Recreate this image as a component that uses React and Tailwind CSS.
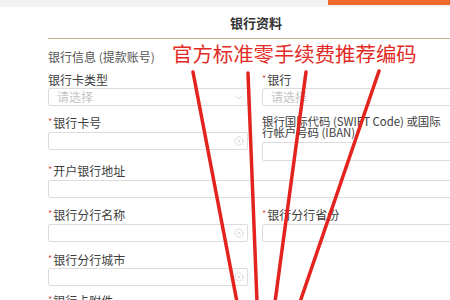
import React from "react";
import { ChevronDown, CircleX } from "lucide-react";

const font = { fontFamily: '"Noto Sans CJK SC", "Noto Sans", sans-serif' };

function Label({ req, children, className = "" }) {
  return (
    <div className={"flex items-center h-[16px] text-[12px] leading-[16px] text-[#3d3d3d] whitespace-nowrap " + className}>
      {req && <span className="text-[#d9534f] text-[9px] leading-none mr-[1px] -mt-[4px]">*</span>}
      <span>{children}</span>
    </div>
  );
}

function Input({ clear, select, placeholder, className = "" }) {
  return (
    <div className={"relative flex items-center h-[18px] border border-[#dcdcdc] rounded-[2px] bg-white pl-[8px] pr-[3px] " + className}>
      {placeholder && <span className="text-[12px] leading-none text-[#c4c4c4]">{placeholder}</span>}
      <div className="flex-1" />
      {select && <ChevronDown size={11} strokeWidth={1.2} className="text-[#b8b8b8]" />}
      {clear && <CircleX size={10} strokeWidth={1.3} className="text-[#c4c4c4]" />}
    </div>
  );
}

export default function App() {
  return (
    <div className="relative w-[450px] h-[300px] overflow-hidden bg-white" style={font}>
      {/* top band */}
      <div className="flex justify-end h-[7px] bg-[#f2f2f2]">
        <div className="w-[122px] h-[5px] bg-[#f0682c]" />
      </div>

      <div className="pl-[48px] w-[560px]">
        {/* title */}
        <div className="flex items-center h-[32px] border-b border-[#cdae8c] pl-[182px]">
          <span className="text-[13px] font-bold text-[#333] leading-none">银行资料</span>
        </div>

        <div className="mt-[10px] text-[12px] leading-[16px] text-[#555]">银行信息 (提款账号)</div>

        {/* row 1 */}
        <div className="grid grid-cols-[200px_1fr] gap-x-[14px] mt-[7px]">
          <div>
            <Label>银行卡类型</Label>
            <Input select placeholder="请选择" />
          </div>
          <div>
            <Label req>银行</Label>
            <Input placeholder="请选择" />
          </div>
        </div>

        {/* row 2 */}
        <div className="grid grid-cols-[200px_1fr] gap-x-[14px] mt-[9px] items-start">
          <div>
            <Label req>银行卡号</Label>
            <Input clear className="mt-[1px]" />
          </div>
          <div>
            <div className="mt-[1px] text-[11.4px] leading-[11px] text-[#3d3d3d] whitespace-nowrap">
              银行国际代码 (SWIFT Code) 或国际
              <br />
              行帐户号码 (IBAN)
            </div>
            <Input className="mt-[4px] h-[19px]" />
          </div>
        </div>

        {/* row 3 */}
        <div className="mt-[2px]">
          <Label req>开户银行地址</Label>
          <Input className="mt-[1px]" />
        </div>

        {/* row 4 */}
        <div className="grid grid-cols-[200px_1fr] gap-x-[14px] mt-[9px]">
          <div>
            <Label req>银行分行名称</Label>
            <Input clear className="mt-[1px]" />
          </div>
          <div>
            <Label req>银行分行省份</Label>
            <Input className="mt-[1px]" />
          </div>
        </div>

        {/* row 5 */}
        <div className="grid grid-cols-[200px_1fr] gap-x-[14px] mt-[10px]">
          <div>
            <Label req>银行分行城市</Label>
            <Input clear />
          </div>
        </div>

        {/* row 6 */}
        <div className="mt-[7px]">
          <Label req>银行卡附件</Label>
        </div>
      </div>

      {/* annotation overlay */}
      <div className="absolute left-[172px] top-[41px] text-[20.4px] leading-[24px] text-[#e32b26] whitespace-nowrap">
        官方标准零手续费推荐编码
      </div>
      <svg className="absolute left-0 top-0" width="450" height="300" viewBox="0 0 450 300">
        <g stroke="#e3231d" strokeWidth="3.5" strokeLinecap="round" fill="none">
          <line x1="193" y1="72" x2="237" y2="302" />
          <line x1="248" y1="73" x2="257" y2="302" />
          <line x1="306" y1="72" x2="275" y2="302" />
          <line x1="379" y1="71" x2="300" y2="302" />
        </g>
      </svg>
    </div>
  );
}
